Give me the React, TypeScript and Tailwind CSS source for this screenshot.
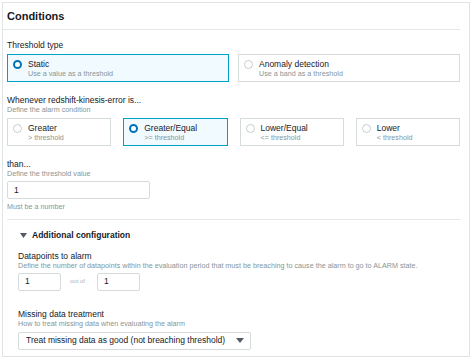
import React from 'react'

function Radio({ checked }: { checked: boolean }) {
  return checked ? (
    <span className="block w-[9px] h-[9px] rounded-full border-[2.5px] border-[#0073bb] bg-white shrink-0" />
  ) : (
    <span className="block w-[9px] h-[9px] rounded-full border border-[#c6ced0] bg-white shrink-0" />
  )
}

function Tile({ title, sub, checked }: { title: string; sub: string; checked?: boolean }) {
  return (
    <div
      className={
        checked
          ? 'h-[28px] border border-[#00a1c9] bg-[#f1faff] flex items-start pl-[5px] pt-[4px] gap-[6px]'
          : 'h-[28px] border border-[#d5dbdb] bg-white flex items-start pl-[5px] pt-[4px] gap-[6px]'
      }
    >
      <div className="pt-[1px]">
        <Radio checked={!!checked} />
      </div>
      <div>
        <p className="text-[8.5px] leading-[10px] text-[#16191f]">{title}</p>
        <p className="text-[7.2px] leading-[10px] text-[#879596]">{sub}</p>
      </div>
    </div>
  )
}

function Label({ title, sub }: { title: string; sub: string }) {
  return (
    <div>
      <p className="text-[8.5px] leading-[10px] text-[#16191f]">{title}</p>
      <p className="text-[7.2px] leading-[10px] text-[#879596]">{sub}</p>
    </div>
  )
}

export default function App() {
  return (
    <div className="w-[474px] h-[359px] bg-white pt-[2px] pl-[2px]" style={{ fontFamily: '"Liberation Sans", Arial, sans-serif' }}>
      <div className="w-[468px] h-[355px] border border-[#e1e4e4] bg-white">
        {/* header */}
        <div className="h-[27px] flex items-center pl-[4px] border-b border-[#e4e7e7] mr-[9px]">
          <h2 className="text-[11px] font-bold text-[#16191f]">Conditions</h2>
        </div>

        <div className="pl-[4px] pr-[9px]">
          <p className="mt-[10px] text-[8.5px] leading-[10px] text-[#16191f]">Threshold type</p>
          <div className="mt-[4px] grid grid-cols-2 gap-[9px]">
            <Tile title="Static" sub="Use a value as a threshold" checked />
            <Tile title="Anomaly detection" sub="Use a band as a threshold" />
          </div>

          <div className="mt-[13px]">
            <Label title="Whenever redshift-kinesis-error is..." sub="Define the alarm condition" />
          </div>
          <div className="mt-[3px] grid grid-cols-4 gap-[12px]">
            <Tile title="Greater" sub="> threshold" />
            <Tile title="Greater/Equal" sub=">= threshold" checked />
            <Tile title="Lower/Equal" sub="<= threshold" />
            <Tile title="Lower" sub="< threshold" />
          </div>

          <div className="mt-[13px]">
            <Label title="than..." sub="Define the threshold value" />
          </div>
          <div className="mt-[2px] w-[143px] h-[18px] border border-[#d5dbdb] rounded-[2px] flex items-center pl-[6px] text-[8.5px] text-[#16191f]">
            1
          </div>
          <p className="mt-[3px] text-[7.2px] leading-[10px] text-[#879596]">Must be a number</p>

          <div className="mt-[7px] border-t border-[#e4e7e7]" />

          <div className="pl-[11px]">
            <div className="mt-[9px] flex items-center gap-[5px] pl-[2px]">
              <svg width="7" height="5" viewBox="0 0 7 5">
                <path d="M0 0 L7 0 L3.5 5 Z" fill="#545b64" />
              </svg>
              <span className="text-[8.5px] font-bold text-[#16191f]">Additional configuration</span>
            </div>

            <div className="mt-[9px]">
              <Label title="Datapoints to alarm" sub="Define the number of datapoints within the evaluation period that must be breaching to cause the alarm to go to ALARM state." />
            </div>
            <div className="mt-[2px] flex items-center">
              <div className="w-[43px] h-[18px] border border-[#d5dbdb] rounded-[2px] flex items-center pl-[6px] text-[8.5px] text-[#16191f]">
                1
              </div>
              <span className="ml-[9px] text-[6px] text-[#aab7b8]">out of</span>
              <div className="ml-[12px] w-[43px] h-[18px] border border-[#d5dbdb] rounded-[2px] flex items-center pl-[6px] text-[8.5px] text-[#16191f]">
                1
              </div>
            </div>

            <div className="mt-[18px]">
              <Label title="Missing data treatment" sub="How to treat missing data when evaluating the alarm" />
            </div>
            <div className="mt-[3px] w-[233px] h-[18px] border border-[#d5dbdb] rounded-[2px] flex items-center justify-between pl-[7px] pr-[6px]">
              <span className="text-[8.5px] text-[#16191f]">Treat missing data as good (not breaching threshold)</span>
              <svg width="8" height="5" viewBox="0 0 8 5">
                <path d="M0 0 L8 0 L4 5 Z" fill="#545b64" />
              </svg>
            </div>
          </div>
        </div>
      </div>
    </div>
  )
}
